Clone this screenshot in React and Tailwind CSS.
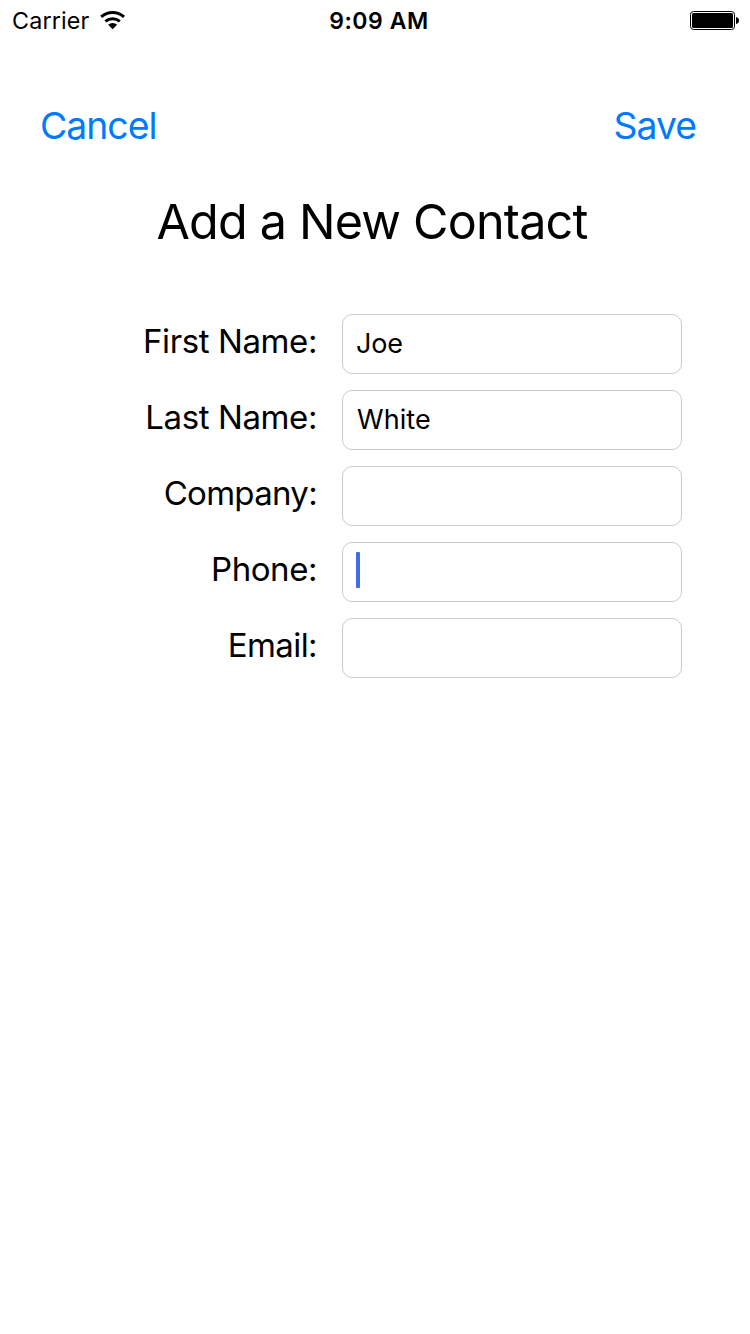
const fields = [
  { label: "First Name:", value: "Joe", tracking: "tracking-[-0.4px]", valueStyle: "tracking-[-0.2px]" },
  { label: "Last Name:", value: "White", tracking: "tracking-[-0.4px]", valueStyle: "pl-px tracking-[0.05px]" },
  { label: "Company:", value: "", tracking: "tracking-[-0.7px]" },
  { label: "Phone:", value: "", tracking: "tracking-[-0.45px]", focused: true },
  { label: "Email:", value: "", tracking: "tracking-[-0.6px]" },
];

export default function App() {
  return (
    <main className="flex h-[1334px] w-[750px] flex-col overflow-hidden bg-white font-['Inter',sans-serif] text-black">
      <header className="grid h-[42px] grid-cols-3 items-center pl-3 pr-[10px]">
        <div className="flex h-[42px] items-center">
          <span className="w-[88px] text-[23.3px] leading-[42px] tracking-[0.15px]">Carrier</span>
          <svg className="mb-[2px]" width="26" height="20" viewBox="0 0 26 20" fill="none">
            <path d="M1.2 6.9a17 17 0 0 1 22.8 0M5.4 11.4a10.8 10.8 0 0 1 14.4 0" stroke="#000" strokeWidth="3" />
            <path d="M12.6 19.2 8.1 14.8a6.4 6.4 0 0 1 9 0z" fill="#000" />
          </svg>
        </div>
        <span className="pl-[6px] text-center text-[23px] font-semibold leading-[42px] tracking-[0.55px]">9:09 AM</span>
        <svg className="mb-px justify-self-end" width="50" height="19" viewBox="0 0 50 19">
          <rect x=".5" y=".5" width="44" height="18" rx="3" fill="none" stroke="#000" />
          <rect x="2" y="2" width="41" height="15" rx="1.5" />
          <path d="M46 6c4 .7 4 6.3 0 7z" />
        </svg>
      </header>
      <nav className="mt-[60px] flex h-12 items-center justify-between pl-10 pr-[54px] text-[37.3px] tracking-[-0.95px] text-[#007aff]">
        <button>Cancel</button>
        <button>Save</button>
      </nav>
      <h1 className="mt-[42px] h-[60px] pr-[6px] text-center text-[48.5px] leading-[60px] tracking-[-0.8px]">Add a New Contact</h1>
      <form className="mt-[62px] flex flex-col gap-4">
        {fields.map((f) => (
          <div key={f.label} className="flex h-[60px]">
            <label className={`mr-[25px] w-[317px] text-right text-[33px] leading-[55px] ${f.tracking}`}>{f.label}</label>
            <div className="flex w-[340px] items-center rounded-[10px] border border-[#ccc] pl-[13px] text-[27px]">
              {f.focused ? (
                <span className="mb-1 h-9 w-1 rounded-[1px] bg-[#436be9]" />
              ) : (
                <span className={f.valueStyle}>{f.value}</span>
              )}
            </div>
          </div>
        ))}
      </form>
    </main>
  );
}
